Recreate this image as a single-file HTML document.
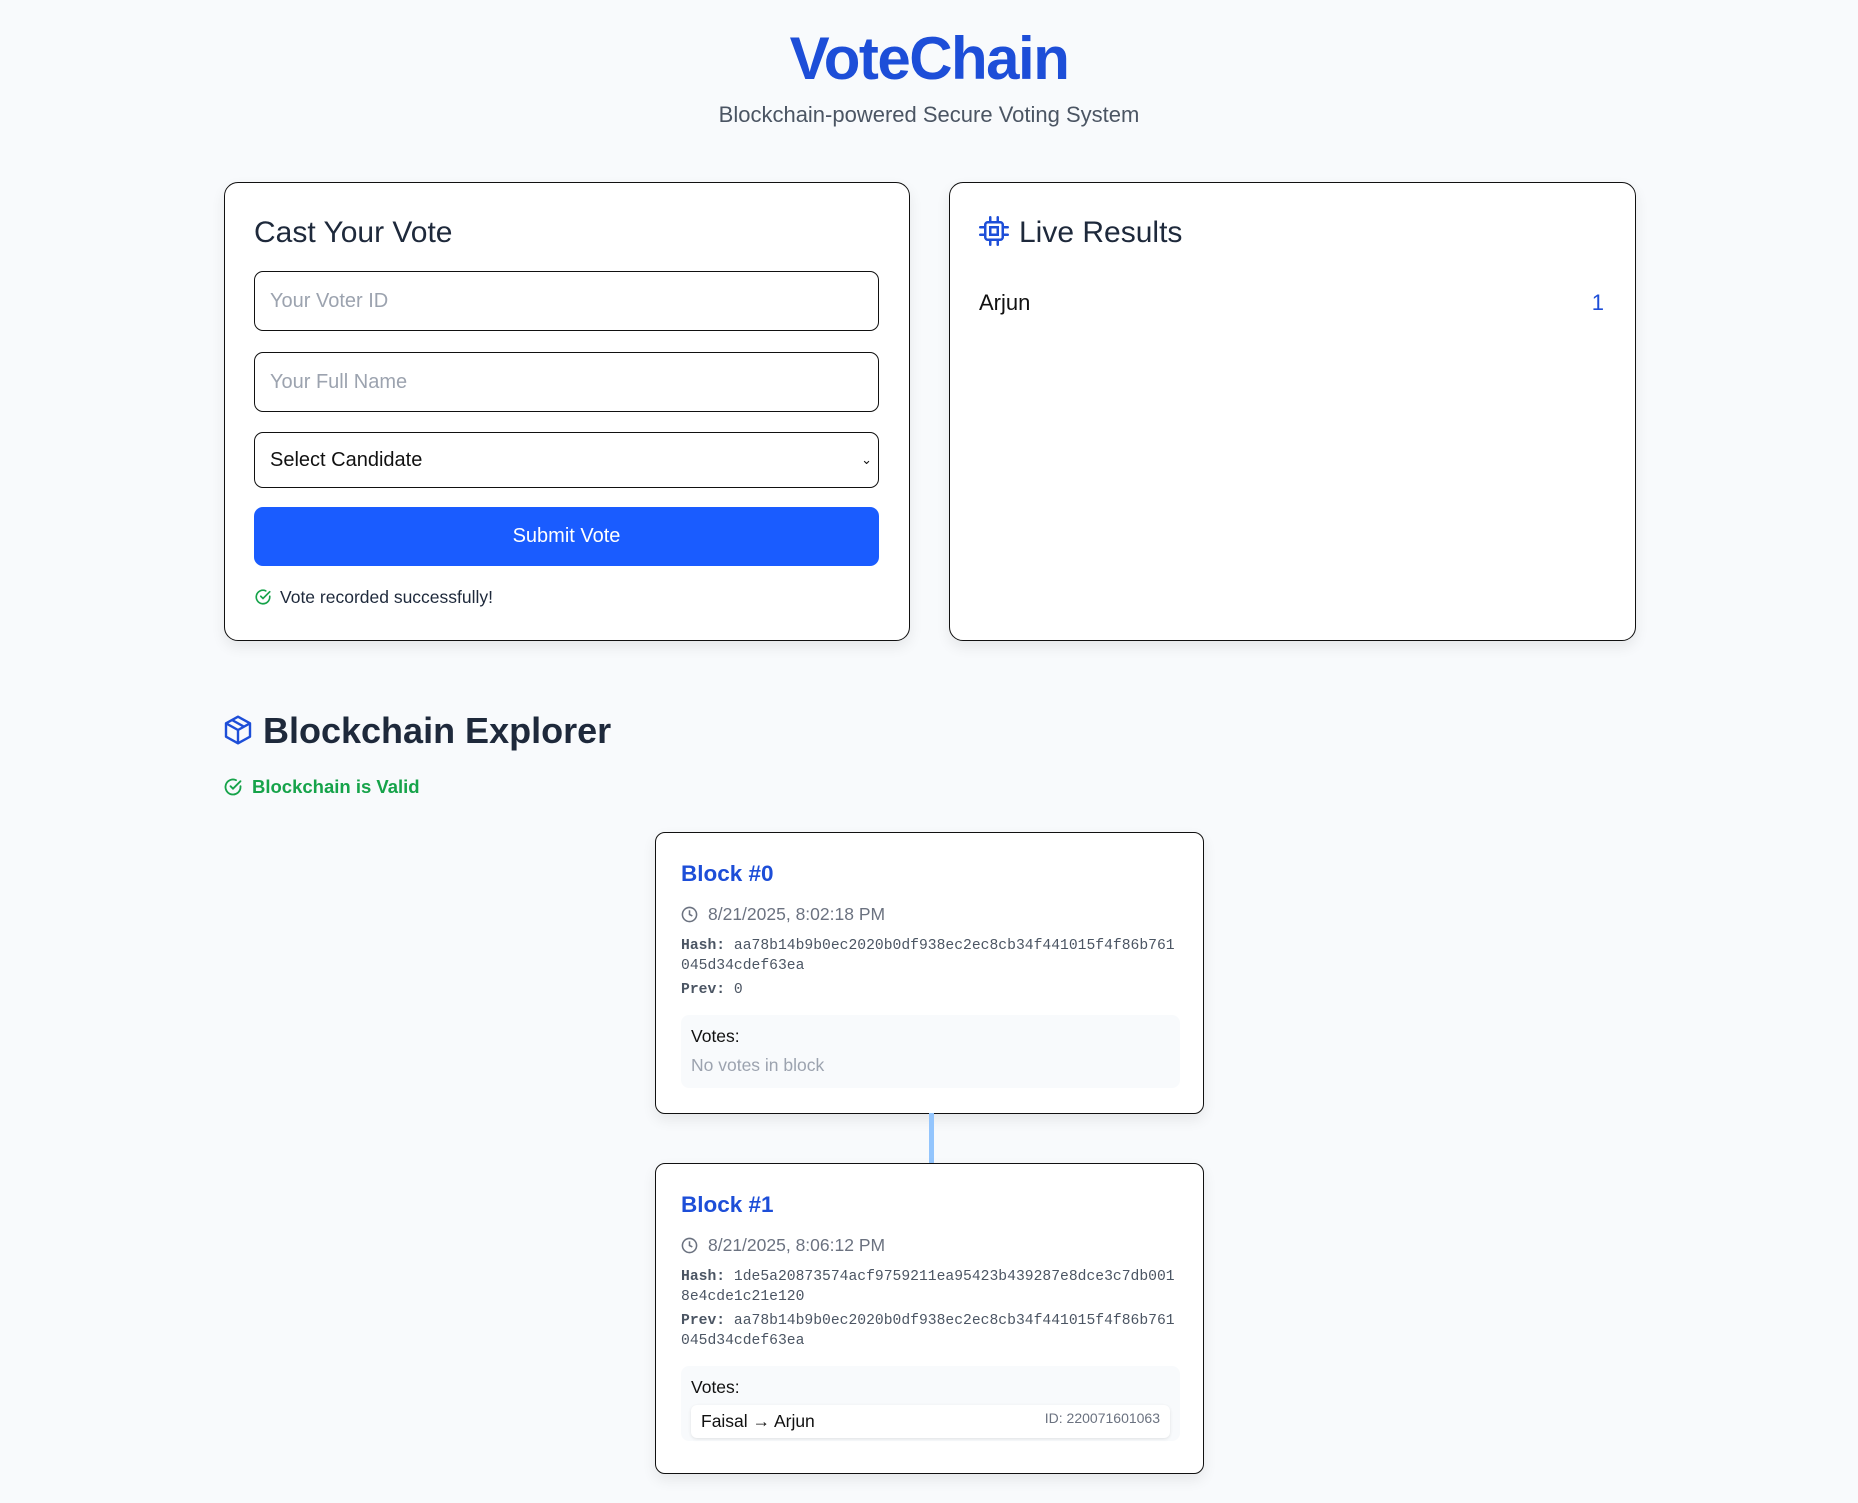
<!DOCTYPE html>
<html><head><meta charset="utf-8"><style>
*{box-sizing:border-box;margin:0;padding:0}
body{width:1858px;height:1503px;background:#f8fafc;font-family:"Liberation Sans",sans-serif;position:relative;overflow:hidden;color:#1e293b}
.a{position:absolute}
.card{position:absolute;background:#fff;border:1.5px solid #111;border-radius:14px;box-shadow:0 6px 14px rgba(0,0,0,.08)}
.inp{position:absolute;left:29px;width:625px;border:1.5px solid #111;border-radius:9px;font-size:20px;color:#9ca3af;padding-left:15px;display:flex;align-items:center}
.mono{font-family:"Liberation Mono",monospace;font-size:14.7px;color:#4b5563;line-height:20px;word-break:break-all}
.mono b{color:#4b5563}
.vbox{position:absolute;left:25px;width:499px;background:#f8fafc;border-radius:8px}
</style></head><body>
<div class="a" style="left:0;width:1858px;top:24px;text-align:center;font-size:60px;font-weight:bold;color:#1d4ed8;letter-spacing:-1.5px">VoteChain</div>
<div class="a" style="left:0;width:1858px;top:102px;text-align:center;font-size:22px;color:#4b5563">Blockchain-powered Secure Voting System</div>

<div class="card" style="left:224px;top:182px;width:686px;height:459px">
 <div class="a" style="left:29px;top:33px;font-size:30px;color:#1e293b">Cast Your Vote</div>
 <div class="inp" style="top:88px;height:60px">Your Voter ID</div>
 <div class="inp" style="top:169px;height:60px">Your Full Name</div>
 <div class="inp" style="top:249px;height:56px;color:#111">Select Candidate<span style="position:absolute;right:6px;font-size:13px">&#8964;</span></div>
 <div class="a" style="left:29px;top:324px;width:625px;height:59px;background:#1a5cff;border-radius:9px;color:#fff;font-size:20px;display:flex;align-items:center;justify-content:center">Submit Vote</div>
 <svg class="a" style="left:29px;top:405px" width="18" height="18" viewBox="0 0 24 24" fill="none" stroke="#16a34a" stroke-width="2.2" stroke-linecap="round"><path d="M21 11v1a9 9 0 1 1-5.3-8.2"/><path d="M9 11l3 3 9-9"/></svg>
 <div class="a" style="left:55px;top:404px;font-size:17.5px;color:#1e293b">Vote recorded successfully!</div>
</div>

<div class="card" style="left:949px;top:182px;width:687px;height:459px">
 <svg class="a" style="left:29px;top:32px" width="30" height="32" viewBox="0 0 24 24" fill="none" stroke="#1d4ed8" stroke-width="2" stroke-linecap="round"><rect x="5" y="5" width="14" height="14" rx="2"/><rect x="9" y="9" width="6" height="6"/><path d="M9 1v4M15 1v4M9 19v4M15 19v4M1 9h4M1 15h4M19 9h4M19 15h4"/></svg>
 <div class="a" style="left:69px;top:33px;font-size:30px;color:#1e293b">Live Results</div>
 <div class="a" style="left:29px;top:107px;font-size:22px;color:#111">Arjun</div>
 <div class="a" style="right:31px;top:107px;font-size:22px;color:#1d4ed8">1</div>
</div>

<svg class="a" style="left:222px;top:714px" width="32" height="32" viewBox="0 0 24 24" fill="none" stroke="#1d4ed8" stroke-width="1.8" stroke-linejoin="round"><path d="M12 2l9 5v10l-9 5-9-5V7z"/><path d="M3 7l9 5 9-5M12 12v10M7.5 4.5l9 5"/></svg>
<div class="a" style="left:263px;top:710px;font-size:36px;font-weight:bold;color:#1e293b">Blockchain Explorer</div>
<svg class="a" style="left:223px;top:777px" width="20" height="20" viewBox="0 0 24 24" fill="none" stroke="#16a34a" stroke-width="2.2" stroke-linecap="round"><path d="M21 11v1a9 9 0 1 1-5.3-8.2"/><path d="M9 11l3 3 9-9"/></svg>
<div class="a" style="left:252px;top:776px;font-size:18.5px;font-weight:bold;color:#16a34a">Blockchain is Valid</div>

<div class="card" style="left:655px;top:832px;width:549px;height:282px;border-radius:10px">
 <div class="a" style="left:25px;top:28px;font-size:22.5px;font-weight:bold;color:#1d4ed8">Block #0</div>
 <svg class="a" style="left:25px;top:73px" width="17" height="17" viewBox="0 0 24 24" fill="none" stroke="#6b7280" stroke-width="2.2"><circle cx="12" cy="12" r="10"/><path d="M12 6v6l4 2"/></svg>
 <div class="a" style="left:52px;top:71px;font-size:17.5px;color:#6b7280">8/21/2025, 8:02:18 PM</div>
 <div class="a mono" style="left:25px;top:103px;width:499px"><b>Hash:</b> aa78b14b9b0ec2020b0df938ec2ec8cb34f441015f4f86b761045d34cdef63ea</div>
 <div class="a mono" style="left:25px;top:147px;width:499px"><b>Prev:</b> 0</div>
 <div class="vbox" style="top:182px;height:73px">
  <div class="a" style="left:10px;top:11px;font-size:17.5px;color:#111">Votes:</div>
  <div class="a" style="left:10px;top:40px;font-size:17.5px;color:#9ca3af">No votes in block</div>
 </div>
</div>
<div class="a" style="left:929px;top:1113px;width:5px;height:50px;background:#93c5fd"></div>
<div class="card" style="left:655px;top:1163px;width:549px;height:311px;border-radius:10px">
 <div class="a" style="left:25px;top:28px;font-size:22.5px;font-weight:bold;color:#1d4ed8">Block #1</div>
 <svg class="a" style="left:25px;top:73px" width="17" height="17" viewBox="0 0 24 24" fill="none" stroke="#6b7280" stroke-width="2.2"><circle cx="12" cy="12" r="10"/><path d="M12 6v6l4 2"/></svg>
 <div class="a" style="left:52px;top:71px;font-size:17.5px;color:#6b7280">8/21/2025, 8:06:12 PM</div>
 <div class="a mono" style="left:25px;top:103px;width:499px"><b>Hash:</b> 1de5a20873574acf9759211ea95423b439287e8dce3c7db0018e4cde1c21e120</div>
 <div class="a mono" style="left:25px;top:147px;width:499px"><b>Prev:</b> aa78b14b9b0ec2020b0df938ec2ec8cb34f441015f4f86b761045d34cdef63ea</div>
 <div class="vbox" style="top:202px;height:75px">
  <div class="a" style="left:10px;top:11px;font-size:17.5px;color:#111">Votes:</div>
  <div class="a" style="left:10px;top:39px;width:479px;height:33px;background:#fff;border-radius:6px;box-shadow:0 1px 3px rgba(0,0,0,.1)">
   <div class="a" style="left:10px;top:6px;font-size:17.5px;color:#111">Faisal → Arjun</div>
   <div class="a" style="right:10px;top:5px;font-size:14px;color:#6b7280">ID: 220071601063</div>
  </div>
 </div>
</div>
</body></html>
